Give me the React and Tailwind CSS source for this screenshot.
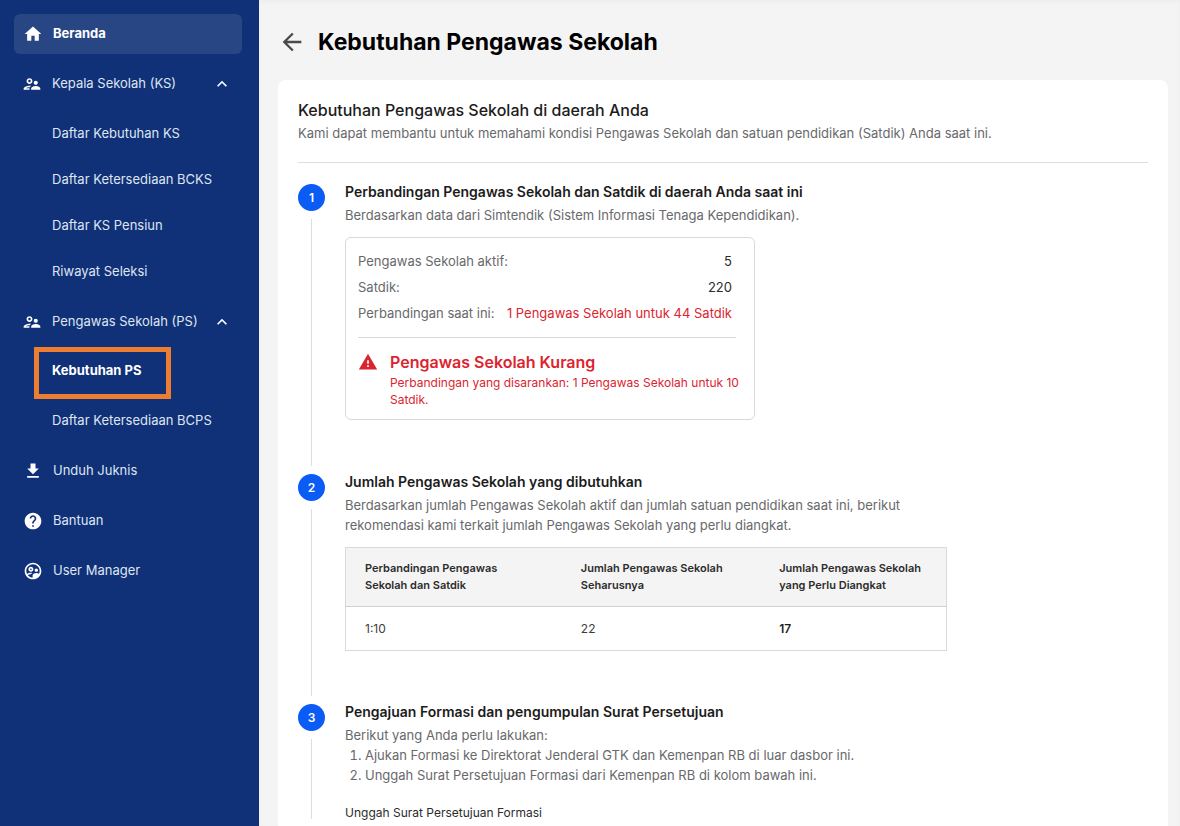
import {
  MdArrowBack,
  MdExpandLess,
  MdGetApp,
  MdHelp,
  MdHome,
  MdOutlineSupervisedUserCircle,
  MdOutlineSupervisorAccount,
  MdWarning,
} from 'react-icons/md';

const KS_LINKS = ['Daftar Kebutuhan KS', 'Daftar Ketersediaan BCKS', 'Daftar KS Pensiun', 'Riwayat Seleksi'];

const NEEDS_COLUMNS = [
  { title: ['Perbandingan Pengawas', 'Sekolah dan Satdik'], value: '1:10', width: 'w-[36%]', valueClass: 'text-[#3c3c3c]' },
  { title: ['Jumlah Pengawas Sekolah', 'Seharusnya'], value: '22', width: 'w-[33%]', valueClass: 'text-[#3c3c3c]' },
  { title: ['Jumlah Pengawas Sekolah', 'yang Perlu Diangkat'], value: '17', width: 'w-[31%]', valueClass: 'font-semibold text-[#1c1c1c]' },
];

function NavLink({ icon: Icon, children }) {
  return (
    <a href="#" className="flex h-10 items-center gap-2.5 pr-2.5 pl-[9px] text-[#dfe5f1]">
      <Icon size={20} className="shrink-0 text-white" />
      {children}
    </a>
  );
}

function NavGroup({ title, children }) {
  return (
    <div>
      <button type="button" className="flex h-10 w-full items-center gap-2.5 pr-2.5 pl-2 text-left text-[#dfe5f1]">
        <MdOutlineSupervisorAccount size={20} className="shrink-0 text-white" />
        <span className="flex-1">{title}</span>
        <MdExpandLess size={20} className="text-white" />
      </button>
      {children}
    </div>
  );
}

function Sidebar() {
  return (
    <aside className="w-[259px] shrink-0 bg-[#103178] pt-3.5 pr-[17px] pl-3.5 text-[13px]">
      <nav className="flex flex-col gap-2.5">
        <a href="#" className="flex h-10 items-center gap-2.5 rounded-md bg-[#284684] pr-2.5 pl-[9px] font-bold text-white">
          <MdHome size={20} className="shrink-0" />
          Beranda
        </a>

        <NavGroup title="Kepala Sekolah (KS)">
          <ul className="mt-2.5 flex flex-col gap-1.5 pl-[38px]">
            {KS_LINKS.map((label) => (
              <li key={label}>
                <a href="#" className="flex h-10 items-center text-[#dfe5f1]">{label}</a>
              </li>
            ))}
          </ul>
        </NavGroup>

        <NavGroup title="Pengawas Sekolah (PS)">
          <ul className="mt-[9px] flex flex-col gap-2.5 pl-[38px]">
            <li className="relative">
              <a href="#" className="flex h-10 items-center font-bold text-white">Kebutuhan PS</a>
              {/* Highlight around the active page */}
              <span className="pointer-events-none absolute -top-1 -left-[18px] h-[52px] w-[137px] border-[5px] border-[#ed7d31]" />
            </li>
            <li>
              <a href="#" className="flex h-10 items-center text-[#dfe5f1]">Daftar Ketersediaan BCPS</a>
            </li>
          </ul>
        </NavGroup>

        <NavLink icon={MdGetApp}>Unduh Juknis</NavLink>
        <NavLink icon={MdHelp}>Bantuan</NavLink>
        <NavLink icon={MdOutlineSupervisedUserCircle}>User Manager</NavLink>
      </nav>
    </aside>
  );
}

function Step({ number, title, children }) {
  return (
    <li className="flex gap-5">
      <div className="flex w-[27px] shrink-0 flex-col items-center gap-2 pt-1">
        <span className="flex size-[27px] shrink-0 items-center justify-center rounded-full bg-[#0a5cf5] text-xs font-semibold text-white">
          {number}
        </span>
        <span className="mb-1 w-px flex-1 bg-[#dedede]" />
      </div>
      <div className="min-w-0 flex-1">
        <h3 className="mb-px text-sm leading-6 font-semibold text-[#1c1c1c]">{title}</h3>
        {children}
      </div>
    </li>
  );
}

function RatioCard() {
  return (
    <div className="mt-3 max-w-[410px] rounded-md border border-[#d9d9d9] pt-[11px] pr-2 pb-[11px] pl-3">
      <dl className="flex flex-col gap-0.5 pr-3.5 text-[13px] leading-6 text-[#68696b]">
        <div className="flex justify-between">
          <dt>Pengawas Sekolah aktif:</dt>
          <dd className="text-[#2c2c2c]">5</dd>
        </div>
        <div className="flex justify-between">
          <dt>Satdik:</dt>
          <dd className="text-[#2c2c2c]">220</dd>
        </div>
        <div className="flex justify-between">
          <dt>Perbandingan saat ini:</dt>
          <dd className="text-[#dc2430]">1 Pengawas Sekolah untuk 44 Satdik</dd>
        </div>
      </dl>
      <hr className="mt-3 mr-2.5 border-[#d9d9d9]" />
      <div className="mt-3 flex gap-3 text-[#dc2430]">
        <MdWarning size={20} className="mt-0.5 shrink-0" />
        <div>
          <h4 className="text-base leading-6 font-semibold">Pengawas Sekolah Kurang</h4>
          <p className="text-xs leading-[17px]">Perbandingan yang disarankan: 1 Pengawas Sekolah untuk 10 Satdik.</p>
        </div>
      </div>
    </div>
  );
}

function NeedsTable() {
  return (
    <table className="mt-3 w-full max-w-[602px] table-fixed border border-[#d9d9d9] text-left">
      <thead className="border-b border-[#d0d0d0] bg-[#f4f4f4] text-[11px] leading-[17px] text-[#2c2c2c]">
        <tr>
          {NEEDS_COLUMNS.map((col) => (
            <th key={col.title.join(' ')} className={`${col.width} py-3 pl-[19px] font-semibold`}>
              {col.title[0]}
              <br />
              {col.title[1]}
            </th>
          ))}
        </tr>
      </thead>
      <tbody className="text-xs leading-4">
        <tr>
          {NEEDS_COLUMNS.map((col) => (
            <td key={col.title.join(' ')} className={`pt-3.5 pb-[13px] pl-[19px] ${col.valueClass}`}>
              {col.value}
            </td>
          ))}
        </tr>
      </tbody>
    </table>
  );
}

export default function App() {
  return (
    <div className="flex min-h-screen bg-[#f4f4f4] font-['Inter',sans-serif]">
      <Sidebar />

      <main className="flex min-w-0 flex-1 flex-col pr-3 pl-[19px] shadow-[inset_0_2px_4px_rgba(0,0,0,0.03)]">
        <header className="flex h-20 items-center gap-3 pt-1">
          <a href="#" aria-label="Kembali" className="text-[#4a4a4a]">
            <MdArrowBack size={28} />
          </a>
          <h1 className="text-[23px] leading-8 font-bold text-black">Kebutuhan Pengawas Sekolah</h1>
        </header>

        <section className="flex-1 rounded-t-lg bg-white px-5 pt-[18px]">
          <h2 className="mb-px text-base leading-6 font-medium text-[#1c1c1c]">Kebutuhan Pengawas Sekolah di daerah Anda</h2>
          <p className="border-b border-[#dedede] pb-[19px] text-[13px] leading-5 text-[#68696b]">
            Kami dapat membantu untuk memahami kondisi Pengawas Sekolah dan satuan pendidikan (Satdik) Anda saat ini.
          </p>

          <ol className="mt-[17px]">
            <Step number={1} title="Perbandingan Pengawas Sekolah dan Satdik di daerah Anda saat ini">
              <div className="pb-[50px]">
                <p className="text-[13px] leading-5 text-[#68696b]">
                  Berdasarkan data dari Simtendik (Sistem Informasi Tenaga Kependidikan).
                </p>
                <RatioCard />
              </div>
            </Step>

            <Step number={2} title="Jumlah Pengawas Sekolah yang dibutuhkan">
              <div className="pb-[49px]">
                <p className="max-w-[602px] text-[13px] leading-5 text-[#68696b]">
                  Berdasarkan jumlah Pengawas Sekolah aktif dan jumlah satuan pendidikan saat ini, berikut rekomendasi
                  kami terkait jumlah Pengawas Sekolah yang perlu diangkat.
                </p>
                <NeedsTable />
              </div>
            </Step>

            <Step number={3} title="Pengajuan Formasi dan pengumpulan Surat Persetujuan">
              <div className="text-[13px] leading-5 text-[#68696b]">
                <p>Berikut yang Anda perlu lakukan:</p>
                <ol className="list-decimal pl-5">
                  <li>Ajukan Formasi ke Direktorat Jenderal GTK dan Kemenpan RB di luar dasbor ini.</li>
                  <li>Unggah Surat Persetujuan Formasi dari Kemenpan RB di kolom bawah ini.</li>
                </ol>
              </div>
              <h4 className="mt-[18px] text-xs leading-5 text-[#2c2c2c]">Unggah Surat Persetujuan Formasi</h4>
            </Step>
          </ol>
        </section>
      </main>
    </div>
  );
}
